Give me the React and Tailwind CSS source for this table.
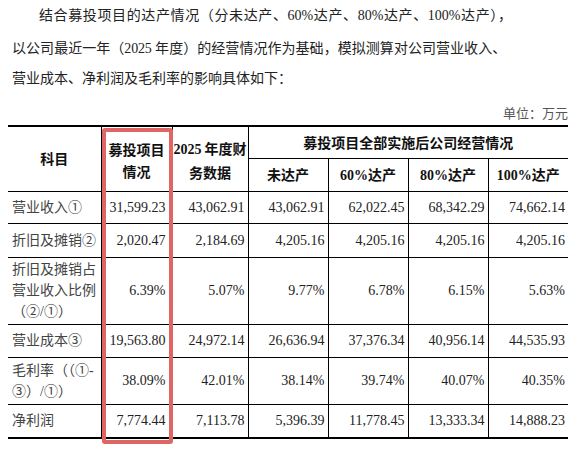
import React from 'react';

const rows = [
  { label: ['营业收入①'], h: 'h-[32px]', vals: ['31,599.23', '43,062.91', '43,062.91', '62,022.45', '68,342.29', '74,662.14'] },
  { label: ['折旧及摊销②'], h: 'h-[34px]', vals: ['2,020.47', '2,184.69', '4,205.16', '4,205.16', '4,205.16', '4,205.16'] },
  { label: ['折旧及摊销占', '营业收入比例', '（②/①）'], h: 'h-[67px]', vals: ['6.39%', '5.07%', '9.77%', '6.78%', '6.15%', '5.63%'] },
  { label: ['营业成本③'], h: 'h-[33px]', vals: ['19,563.80', '24,972.14', '26,636.94', '37,376.34', '40,956.14', '44,535.93'] },
  { label: ['毛利率（（①-', '③）/①）'], h: 'h-[47px]', vals: ['38.09%', '42.01%', '38.14%', '39.74%', '40.07%', '40.35%'] },
  { label: ['净利润'], h: 'h-[34px]', vals: ['7,774.44', '7,113.78', '5,396.39', '11,778.45', '13,333.34', '14,888.23'] },
];

const font = "font-['Liberation_Serif','Noto_Sans_CJK_SC',serif]";

const App = () => {
  return (
    <div className={`w-[580px] h-[449px] bg-white overflow-hidden text-[#222] ${font}`}>
      {/* intro paragraph, broken as in the source document */}
      <div className="pl-[12px] text-[14px]">
        <div className="h-[32px] leading-[31px] pl-[27px] w-[500px] whitespace-nowrap text-justify [text-align-last:justify]">
          结合募投项目的达产情况（分未达产、60%达产、80%达产、100%达产），
        </div>
        <div className="h-[34px] leading-[34px] w-[494px] whitespace-nowrap tracking-[-0.2px] text-justify [text-align-last:justify]">
          以公司最近一年（2025 年度）的经营情况作为基础，模拟测算对公司营业收入、
        </div>
        <div className="h-[26px] leading-[26px]">营业成本、净利润及毛利率的影响具体如下：</div>
      </div>

      <div className="mt-[12px] h-[20px] leading-[20px] text-right pr-[12px] text-[13px] text-[#555]">
        单位：万元
      </div>

      <div className="relative ml-[8px] mt-[1px] w-[560px]">
        <table className="table-fixed border-collapse w-[560px] text-[14px] border-t-2 border-b-2 border-black">
          <colgroup>
            <col className="w-[93px]" />
            <col className="w-[71px]" />
            <col className="w-[76px]" />
            <col className="w-[80px]" />
            <col className="w-[80px]" />
            <col className="w-[80px]" />
            <col className="w-[80px]" />
          </colgroup>
          <thead className="font-['Noto_Sans_CJK_SC',sans-serif] font-bold text-[#111]">
            <tr className="h-[32px]">
              <th rowSpan={2} className="border-r border-b border-black text-center align-middle">科目</th>
              <th rowSpan={2} className="border border-black text-center align-middle leading-[22px] pt-[2px]">
                募投项目<br />情况
              </th>
              <th rowSpan={2} className="border border-black text-center align-middle leading-[22px] pt-[2px] whitespace-nowrap">
                <span className="font-['Liberation_Serif',serif]">2025</span> 年度财<br />务数据
              </th>
              <th colSpan={4} className="border-l border-b border-black text-center align-middle">
                募投项目全部实施后公司经营情况
              </th>
            </tr>
            <tr className="h-[33px]">
              <th className="border border-black">未达产</th>
              <th className="border border-black"><span className="font-['Liberation_Serif',serif]">60%</span>达产</th>
              <th className="border border-black"><span className="font-['Liberation_Serif',serif]">80%</span>达产</th>
              <th className="border-l border-b border-black"><span className="font-['Liberation_Serif',serif]">100%</span>达产</th>
            </tr>
          </thead>
          <tbody>
            {rows.map((r, i) => (
              <tr key={i} className={r.h}>
                <td className="border-r border-b border-black pl-[4px] text-left align-middle text-[#444] leading-[21px] whitespace-nowrap">
                  {r.label.map((l, j) => (
                    <div key={j}>{l}</div>
                  ))}
                </td>
                {r.vals.map((v, j) => (
                  <td
                    key={j}
                    className={`border-b border-black text-right align-middle ${j === 0 ? 'pr-[6px]' : 'pr-[3px]'} ${
                      j === r.vals.length - 1 ? 'border-l' : 'border-x'
                    }`}
                  >
                    {v}
                  </td>
                ))}
              </tr>
            ))}
          </tbody>
        </table>
        {/* highlight frame around the project column */}
        <div className="absolute left-[94px] top-[3px] w-[71px] h-[316px] border-[4px] border-[#e06666] rounded-[3px] pointer-events-none" />
      </div>
    </div>
  );
};

export default App;
